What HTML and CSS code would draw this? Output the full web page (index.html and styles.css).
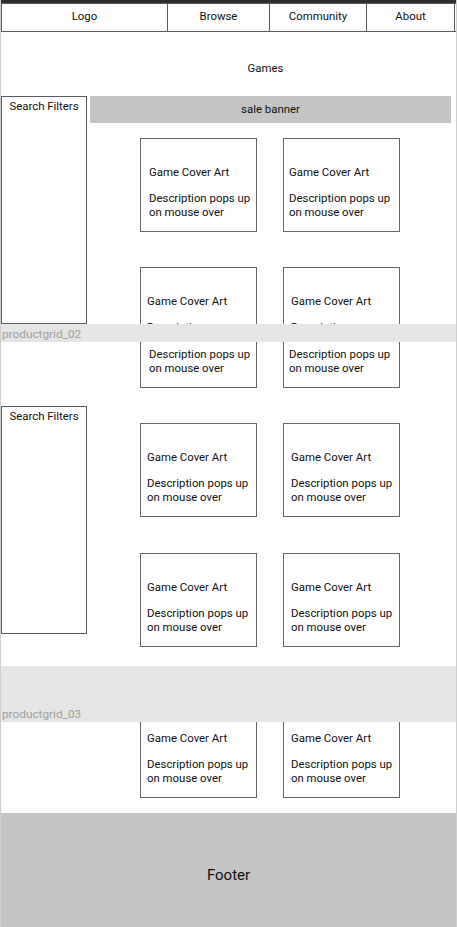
FILE: index.html
```html
<!DOCTYPE html>
<html>
<head>
<meta charset="utf-8">
<link rel="stylesheet" href="styles.css">
</head>
<body>
<div class="page">
  <div class="topbar"></div>
  <nav class="nav">
    <div class="nav-cell logo">Logo</div>
    <div class="nav-cell browse">Browse</div>
    <div class="nav-cell community">Community</div>
    <div class="nav-cell about">About</div>
  </nav>

  <section class="frame frame1">
    <h1 class="title">Games</h1>
    <div class="layout">
      <aside class="filters">Search Filters</aside>
      <div class="main">
        <div class="banner">sale banner</div>
        <div class="grid grid1">
          <div class="card pl9"><p class="card-title">Game Cover Art</p><p class="card-desc">Description pops up<br>on mouse over</p></div>
          <div class="card pl6"><p class="card-title">Game Cover Art</p><p class="card-desc">Description pops up<br>on mouse over</p></div>
          <div class="card pl7"><p class="card-title">Game Cover Art</p><p class="card-desc">Description pops up<br>on mouse over</p></div>
          <div class="card pl8"><p class="card-title">Game Cover Art</p><p class="card-desc">Description pops up<br>on mouse over</p></div>
        </div>
      </div>
    </div>
  </section>

  <div class="band band-short"><span class="band-label">productgrid_02</span></div>

  <section class="frame frame2">
    <div class="fragment fragment2">
      <div class="card pl9"><p class="card-title">Game Cover Art</p><p class="card-desc">Description pops up<br>on mouse over</p></div>
      <div class="card pl6"><p class="card-title">Game Cover Art</p><p class="card-desc">Description pops up<br>on mouse over</p></div>
    </div>
    <div class="layout">
      <aside class="filters">Search Filters</aside>
      <div class="main">
        <div class="grid grid2">
          <div class="card pl7"><p class="card-title">Game Cover Art</p><p class="card-desc">Description pops up<br>on mouse over</p></div>
          <div class="card pl8"><p class="card-title">Game Cover Art</p><p class="card-desc">Description pops up<br>on mouse over</p></div>
          <div class="card pl7"><p class="card-title">Game Cover Art</p><p class="card-desc">Description pops up<br>on mouse over</p></div>
          <div class="card pl8"><p class="card-title">Game Cover Art</p><p class="card-desc">Description pops up<br>on mouse over</p></div>
        </div>
      </div>
    </div>
  </section>

  <div class="band band-tall"><span class="band-label">productgrid_03</span></div>

  <section class="frame frame3">
    <div class="fragment fragment3">
      <div class="card pl7"><p class="card-title">Game Cover Art</p><p class="card-desc">Description pops up<br>on mouse over</p></div>
      <div class="card pl8"><p class="card-title">Game Cover Art</p><p class="card-desc">Description pops up<br>on mouse over</p></div>
    </div>
  </section>

  <footer class="footer">Footer</footer>
</div>
</body>
</html>
```

FILE: styles.css
```css
* { box-sizing: border-box; }

html, body {
  margin: 0;
  padding: 0;
  background: #ffffff;
}

body {
  font-family: Roboto, "Liberation Sans", Arial, sans-serif;
  font-size: 11.4px;
  color: #111111;
}

.page {
  width: 457px;
  height: 927px;
  overflow: hidden;
  border-left: 1px solid #cfcfcf;
  border-right: 1px solid #cfcfcf;
  background: #ffffff;
}

.topbar {
  height: 3px;
  background: #2d2d2d;
}

.nav {
  display: flex;
  height: 29px;
  border-top: 1px solid #5a5a5a;
  border-bottom: 1px solid #5a5a5a;
  border-left: 1px solid #5a5a5a;
  width: 455px;
}

.nav-cell {
  display: flex;
  align-items: center;
  justify-content: center;
  border-right: 1px solid #5a5a5a;
  line-height: 14px;
  padding-bottom: 3px;
}

.logo { width: 166px; }
.browse { width: 102px; }
.community { width: 97px; }
.about { width: 88px; }

.frame {
  overflow: hidden;
  background: #ffffff;
}

.frame1 { height: 292px; padding-top: 29px; }
.frame2 { height: 324px; }
.frame3 { height: 91px; }

.title {
  margin: 0 0 21px 0;
  font-size: 11.4px;
  font-weight: 400;
  line-height: 14px;
  text-align: center;
  padding-left: 74px;
}

.layout {
  display: flex;
  gap: 3px;
  align-items: flex-start;
}

.filters {
  flex: none;
  width: 86px;
  height: 228px;
  border: 1px solid #5a5a5a;
  text-align: center;
  padding-top: 2px;
  line-height: 14px;
  white-space: nowrap;
}

.main {
  width: 361px;
}

.banner {
  height: 27px;
  background: #c4c4c4;
  display: flex;
  align-items: center;
  justify-content: center;
  line-height: 14px;
  padding-bottom: 2px;
}

.grid {
  display: grid;
  grid-template-columns: 117px 117px;
  column-gap: 26px;
  padding-left: 50px;
}

.grid1 { margin-top: 15px; row-gap: 35px; }
.grid2 { padding-top: 17px; row-gap: 36px; }

.card {
  width: 117px;
  height: 94px;
  border: 1px solid #666666;
  padding-top: 26px;
  white-space: nowrap;
  background: #ffffff;
}

.pl6 { padding-left: 5px; }
.pl7 { padding-left: 6px; }
.pl8 { padding-left: 7px; }
.pl9 { padding-left: 8px; }

.card-title {
  margin: 0 0 13px 0;
  line-height: 14px;
}

.card-desc {
  margin: 0;
  line-height: 13.5px;
}

.fragment {
  display: flex;
  gap: 26px;
  padding-left: 139px;
}

.fragment2 { margin-top: -48px; margin-bottom: 18px; }
.fragment3 { margin-top: -18px; }

.band {
  background: #e5e5e5;
  display: flex;
  align-items: flex-end;
  padding-left: 1px;
}

.band-short { height: 18px; padding-bottom: 1px; }
.band-tall { height: 56px; padding-bottom: 1px; }

.band-label {
  font-size: 11.8px;
  line-height: 14px;
  color: #a0a0a0;
}

.footer {
  height: 114px;
  background: #c4c4c4;
  text-align: center;
  font-size: 15px;
  line-height: 18px;
  padding-top: 53px;
  color: #111111;
}
```
